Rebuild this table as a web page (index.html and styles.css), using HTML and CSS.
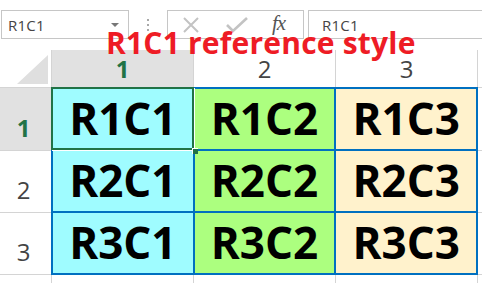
FILE: index.html
```html
<!DOCTYPE html>
<html>
<head>
<meta charset="utf-8">
<link rel="stylesheet" href="styles.css">
</head>
<body>
<div class="app">
  <div class="toolbar">
    <div class="namebox">
      <span class="ref">R1C1</span>
      <span class="caret"></span>
    </div>
    <div class="dots"><i></i><i></i><i></i></div>
    <div class="fxbox">
      <svg class="ic" width="18" height="18" viewBox="0 0 18 18"><path d="M2 2 L16 16 M16 2 L2 16" stroke="#c3c3c3" stroke-width="2" fill="none"/></svg>
      <svg class="ic" width="22" height="16" viewBox="0 0 22 16"><path d="M1 8 L7 14 L21 1" stroke="#c3c3c3" stroke-width="2.6" fill="none"/></svg>
      <span class="fx">fx</span>
    </div>
    <div class="formula"><span class="ref">R1C1</span></div>
  </div>
  <div class="title">R1C1 reference style</div>
  <div class="sheet">
    <div class="corner"><svg width="31" height="29" viewBox="0 0 31 29"><polygon points="31,0 31,29 0,29" fill="#dfdfdf"/></svg></div>
    <div class="colhead sel">1</div>
    <div class="colhead">2</div>
    <div class="colhead">3</div>
    <div class="blank"></div>

    <div class="rowhead sel">1</div>
    <div class="block">
      <div class="cell c1 active">R1C1</div>
      <div class="cell c2">R1C2</div>
      <div class="cell c3">R1C3</div>
      <div class="cell c1">R2C1</div>
      <div class="cell c2">R2C2</div>
      <div class="cell c3">R2C3</div>
      <div class="cell c1">R3C1</div>
      <div class="cell c2">R3C2</div>
      <div class="cell c3">R3C3</div>
    </div>
    <div class="blank"></div>

    <div class="rowhead">2</div>
    <div class="blank"></div>
    <div class="rowhead">3</div>
    <div class="blank"></div>

    <div class="blank"></div>
    <div class="blank"></div>
    <div class="blank"></div>
    <div class="blank"></div>
    <div class="blank"></div>
  </div>
</div>
</body>
</html>
```

FILE: styles.css
```css
html, body {
  margin: 0;
  padding: 0;
  background: #fff;
}
.app {
  position: relative;
  width: 482px;
  height: 283px;
  overflow: hidden;
  font-family: "Open Sans", "Noto Sans", sans-serif;
}
.toolbar {
  height: 50px;
  box-sizing: border-box;
  padding: 10px 0 11px 1px;
  display: flex;
  align-items: stretch;
}
.namebox {
  width: 128px;
  box-sizing: border-box;
  border: 1px solid #c6c6c6;
  display: flex;
  align-items: center;
  justify-content: space-between;
  padding: 0 9px 0 6px;
}
.ref {
  font-size: 15px;
  color: #444;
  letter-spacing: 0.2px;
}
.caret {
  width: 0;
  height: 0;
  border-left: 4px solid transparent;
  border-right: 4px solid transparent;
  border-top: 4px solid #777;
  margin-top: 1px;
}
.dots {
  width: 38px;
  display: flex;
  flex-direction: column;
  align-items: center;
  justify-content: center;
  gap: 3px;
}
.dots i {
  display: block;
  width: 2px;
  height: 2px;
  background: #a8a8a8;
}
.fxbox {
  width: 137px;
  box-sizing: border-box;
  border: 1px solid #c6c6c6;
  display: flex;
  align-items: center;
  padding: 0 0 0 14px;
}
.fxbox .ic:nth-child(1) { margin-right: 26px; }
.fxbox .ic:nth-child(2) { margin-right: 24px; }
.fx {
  font-family: "Liberation Serif", "DejaVu Serif", serif;
  font-style: italic;
  font-size: 21px;
  color: #555;
  letter-spacing: -1px;
  margin-top: -2px;
}
.formula {
  flex: 1;
  margin-left: 4px;
  border: 1px solid #c6c6c6;
  border-right: none;
  display: flex;
  align-items: center;
  padding-left: 13px;
}
.title {
  position: absolute;
  left: 106px;
  top: 23px;
  font-size: 30px;
  line-height: 40px;
  font-weight: 700;
  color: #ee1c25;
  white-space: nowrap;
  letter-spacing: 0.2px;
  z-index: 3;
}
.sheet {
  display: grid;
  grid-template-columns: 51px 141px 141px 141px 1fr;
  grid-template-rows: 37px 62px 61px 61px 1fr;
  gap: 1px;
  background: #d4d4d4;
  height: 233px;
}
.corner {
  background: #fff;
  display: flex;
  align-items: flex-end;
  justify-content: flex-end;
  padding: 0 3px 3px 0;
}
.colhead {
  background: #fff;
  font-size: 24px;
  color: #444;
  display: flex;
  align-items: flex-end;
  justify-content: center;
  line-height: 30px;
  padding-bottom: 3px;
}
.colhead.sel, .rowhead.sel {
  background: #e1e1e1;
  color: #217346;
  font-weight: 700;
}
.rowhead {
  background: #fff;
  font-size: 24px;
  color: #444;
  display: flex;
  align-items: flex-end;
  justify-content: center;
  line-height: 30px;
  padding: 0 4px 7px 0;
}
.blank {
  background: #fff;
}
.block {
  grid-column: 2 / 5;
  grid-row: 2 / 5;
  margin: -1px;
  background: #0070c0;
  padding: 2px;
  display: grid;
  grid-template-columns: 1fr 1fr 1fr;
  grid-template-rows: 1fr 1fr 1fr;
  gap: 2px;
  position: relative;
  z-index: 1;
}
.cell {
  display: flex;
  align-items: center;
  justify-content: center;
  font-size: 44px;
  font-weight: 700;
  color: #000;
  line-height: 1;
  padding-bottom: 3px;
}
.c1 { background: #9ffcff; }
.c2 { background: #acff7f; }
.c3 { background: #fff2cc; }
.active {
  position: relative;
  z-index: 2;
}
.active::before {
  content: "";
  position: absolute;
  left: -2px;
  top: -2px;
  right: -1px;
  bottom: -1px;
  border: 2px solid #217346;
  box-shadow: 1px 1px 0 #fff;
}
.active::after {
  content: "";
  position: absolute;
  right: -5px;
  bottom: -5px;
  width: 5px;
  height: 5px;
  background: #217346;
  border-left: 1px solid #fff;
  border-top: 1px solid #fff;
}
```
